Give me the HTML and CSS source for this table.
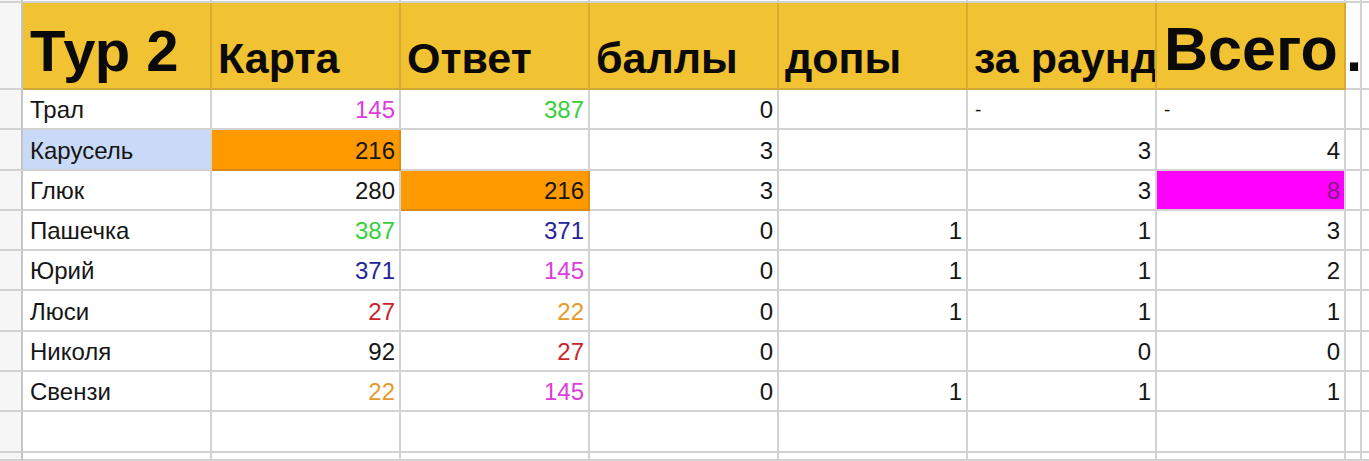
FILE: index.html
```html
<!DOCTYPE html>
<html lang="ru">
<head>
<meta charset="utf-8">
<title>Тур 2</title>
<link rel="stylesheet" href="styles.css">
</head>
<body>
<div class="sheet">
  <div class="c g r0"></div><div class="c r0"></div><div class="c r0"></div><div class="c r0"></div><div class="c r0"></div><div class="c r0"></div><div class="c r0"></div><div class="c r0"></div><div class="c r0"></div><div class="c r0 e"></div>

  <div class="c g"></div>
  <div class="c h big">Тур 2</div>
  <div class="c h">Карта</div>
  <div class="c h">Ответ</div>
  <div class="c h">баллы</div>
  <div class="c h">допы</div>
  <div class="c h">за раунд</div>
  <div class="c h big total">Всего</div>
  <div class="c dot">.</div>
  <div class="c e"></div>

  <div class="c g"></div>
  <div class="c">Трал</div>
  <div class="c n mag">145</div>
  <div class="c n grn">387</div>
  <div class="c n">0</div>
  <div class="c n"></div>
  <div class="c dash">-</div>
  <div class="c dash">-</div>
  <div class="c"></div>
  <div class="c e"></div>

  <div class="c g"></div>
  <div class="c sel">Карусель</div>
  <div class="c n orange">216</div>
  <div class="c n"></div>
  <div class="c n">3</div>
  <div class="c n"></div>
  <div class="c n">3</div>
  <div class="c n">4</div>
  <div class="c"></div>
  <div class="c e"></div>

  <div class="c g"></div>
  <div class="c">Глюк</div>
  <div class="c n">280</div>
  <div class="c n orange">216</div>
  <div class="c n">3</div>
  <div class="c n"></div>
  <div class="c n">3</div>
  <div class="c n pink">8</div>
  <div class="c"></div>
  <div class="c e"></div>

  <div class="c g"></div>
  <div class="c">Пашечка</div>
  <div class="c n grn">387</div>
  <div class="c n blu">371</div>
  <div class="c n">0</div>
  <div class="c n">1</div>
  <div class="c n">1</div>
  <div class="c n">3</div>
  <div class="c"></div>
  <div class="c e"></div>

  <div class="c g"></div>
  <div class="c">Юрий</div>
  <div class="c n blu">371</div>
  <div class="c n mag">145</div>
  <div class="c n">0</div>
  <div class="c n">1</div>
  <div class="c n">1</div>
  <div class="c n">2</div>
  <div class="c"></div>
  <div class="c e"></div>

  <div class="c g"></div>
  <div class="c">Люси</div>
  <div class="c n red">27</div>
  <div class="c n org">22</div>
  <div class="c n">0</div>
  <div class="c n">1</div>
  <div class="c n">1</div>
  <div class="c n">1</div>
  <div class="c"></div>
  <div class="c e"></div>

  <div class="c g"></div>
  <div class="c">Николя</div>
  <div class="c n">92</div>
  <div class="c n red">27</div>
  <div class="c n">0</div>
  <div class="c n"></div>
  <div class="c n">0</div>
  <div class="c n">0</div>
  <div class="c"></div>
  <div class="c e"></div>

  <div class="c g"></div>
  <div class="c">Свензи</div>
  <div class="c n org">22</div>
  <div class="c n mag">145</div>
  <div class="c n">0</div>
  <div class="c n">1</div>
  <div class="c n">1</div>
  <div class="c n">1</div>
  <div class="c"></div>
  <div class="c e"></div>

  <div class="c g"></div><div class="c"></div><div class="c"></div><div class="c"></div><div class="c"></div><div class="c"></div><div class="c"></div><div class="c"></div><div class="c"></div><div class="c e"></div>
  <div class="c g"></div><div class="c"></div><div class="c"></div><div class="c"></div><div class="c"></div><div class="c"></div><div class="c"></div><div class="c"></div><div class="c"></div><div class="c e"></div>
</div>
</body>
</html>
```

FILE: styles.css
```css
html, body {
  margin: 0;
  padding: 0;
  background: #ffffff;
  overflow: hidden;
}

.sheet {
  display: grid;
  grid-template-columns: 23px repeat(7, 189px) 16px 1fr;
  grid-template-rows: 3px 87px 40px 41px 40px 40px 40px 41px 40px 40px 41px 8px;
  width: 1369px;
  height: 461px;
  overflow: hidden;
  font-family: "Liberation Sans", Arial, sans-serif;
  font-size: 24px;
  color: #151515;
}

.c {
  box-sizing: border-box;
  border-right: 2px solid #d2d2d2;
  border-bottom: 2px solid #d2d2d2;
  background: #ffffff;
  display: flex;
  align-items: flex-end;
  justify-content: flex-start;
  padding: 0 6px 6px 7px;
  line-height: 1;
  white-space: nowrap;
  overflow: hidden;
  min-width: 0;
}

.c.e {
  border-right: none;
}

.g {
  background: #f6f6f6;
  border-right-color: #c4c4c4;
  padding: 0;
}

.r0 {
  padding: 0;
}

.h {
  background: #f1c232;
  border-right-color: #d8aa2e;
  border-bottom-color: #cfa73a;
  font-weight: bold;
  font-size: 43px;
  padding: 0 0 8px 6px;
  color: #0a0a0a;
}

.h.big {
  font-size: 58px;
  padding-left: 7px;
  padding-bottom: 8px;
}

.h.total {
  font-size: 61px;
  padding-left: 7px;
}

.dot {
  font-weight: bold;
  font-size: 58px;
  padding: 0 0 8px 0;
  overflow: visible;
  color: #0a0a0a;
}

.n {
  justify-content: flex-end;
  padding-right: 4px;
}

.dash {
  padding-left: 7px;
  padding-bottom: 9px;
  font-size: 19px;
}

.sel {
  background: #c9daf8;
}

.orange {
  background: #ff9900;
  border-right-color: #e08a10;
  border-bottom-color: #d98a1a;
}

.pink {
  background: #ff00ff;
  color: #8a1a8a;
}

.mag { color: #dc3ddc; }
.grn { color: #35cf3a; }
.blu { color: #25249a; }
.red { color: #c8242a; }
.org { color: #e69a2a; }
```
